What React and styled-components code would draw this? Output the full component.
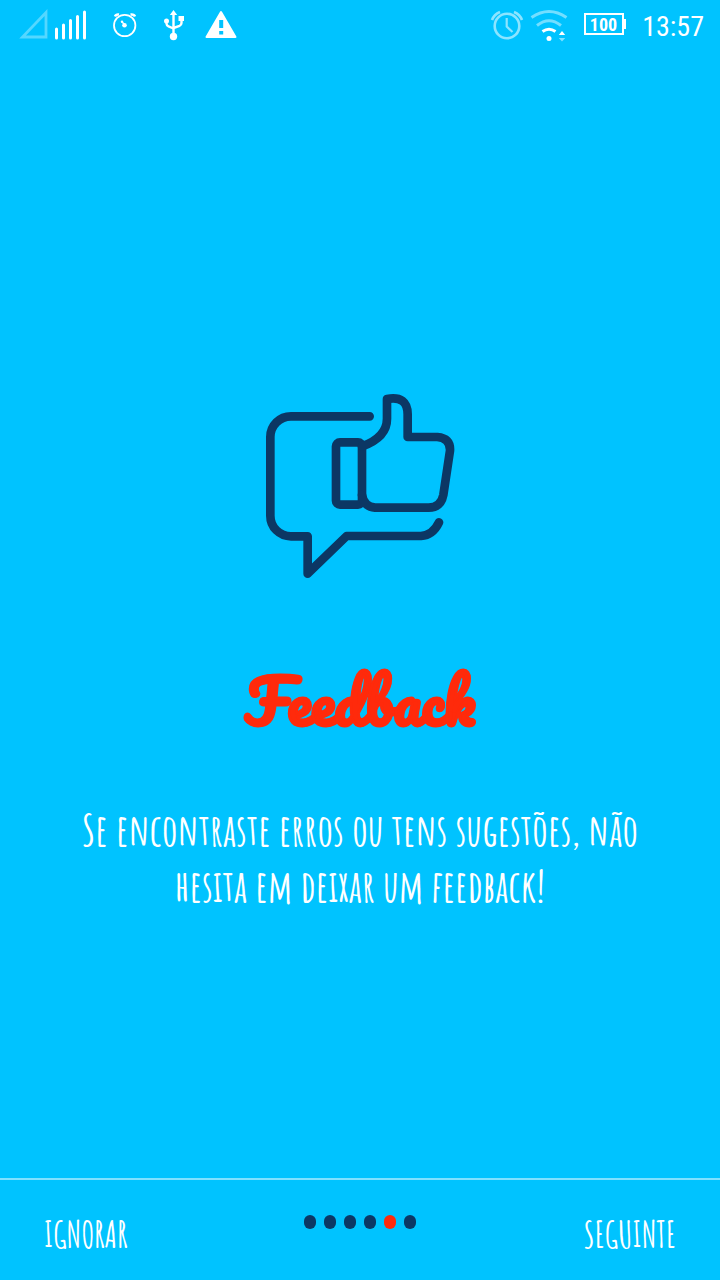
import React from 'react';
import styled, { createGlobalStyle } from 'styled-components';

const sky = '#00c3ff';
const navy = '#0c3764';
const red = '#ff2a0b';
const narrow = '"Amatic SC", "Liberation Sans Narrow", "Roboto Condensed", "Liberation Sans", sans-serif';

const GlobalStyle = createGlobalStyle`
  *, *::before, *::after { box-sizing: border-box; }
  body { margin: 0; background: ${sky}; }
`;

const Screen = styled.div`
  min-height: 100vh;
  display: flex;
  flex-direction: column;
  background: ${sky};
  color: #fff;
`;

const StatusBar = styled.header`
  display: flex;
  justify-content: space-between;
  height: 50px;
  padding: 0 16px 0 18px;
`;

const StatusGroup = styled.div`
  display: flex;
  align-items: center;
  gap: ${({ $gap }) => $gap}px;
`;

const StatusIcon = styled.svg`
  display: block;
  height: 50px;
  flex: none;
`;

const Clock = styled.time`
  font: 400 28px/50px "Roboto Condensed", Roboto, sans-serif;
  padding-top: 4px;
`;

const Slide = styled.main`
  flex: 1;
  display: flex;
  flex-direction: column;
  align-items: center;
  justify-content: center;
  padding: 65px 64px 0;
  text-align: center;
`;

const Illustration = styled.svg`
  width: 220px;
  height: 210px;
`;

const Title = styled.h1`
  margin: 69px 0 58px;
  font: 700 60px/84px Pacifico, "Liberation Serif", cursive;
  color: ${red};
  -webkit-text-stroke: 1px ${red};
`;

const Description = styled.p`
  margin: 0;
  max-width: 592px;
  font: 700 44px/56px ${narrow};
`;

const Footer = styled.footer`
  display: grid;
  grid-template-columns: 1fr auto 1fr;
  height: 102px;
  padding: 0 44px;
  border-top: 2px solid #7fe1ff;
`;

const NavButton = styled.button`
  justify-self: ${({ $side }) => $side};
  align-self: center;
  margin-top: 8px;
  padding: 0;
  border: 0;
  background: none;
  color: inherit;
  font: 700 36px/48px ${narrow};
  text-transform: uppercase;
  cursor: pointer;
`;

const Dots = styled.ol`
  display: flex;
  gap: 8px;
  margin: 35px 0 0;
  padding: 0;
  list-style: none;
`;

const Dot = styled.li`
  width: 12px;
  height: 14px;
  border-radius: 6px;
  background: ${({ $active }) => ($active ? red : navy)};
`;

function SystemIcons() {
  return (
    <StatusGroup $gap={18}>
      <StatusIcon width="72" viewBox="18 0 72 50" aria-label="Signal">
        <path d="M46 12.500V37H22.500Z" fill="none" stroke="#fff" strokeOpacity=".33" strokeWidth="2.800" />
        <path d="M56.500 29v9M63.500 25v13M70.500 20.500v17.500M77.500 16.500v21.500M84.500 12v26" stroke="#fff" strokeWidth="3" strokeLinecap="round" />
      </StatusIcon>
      <StatusIcon width="34" viewBox="108 0 34 50" aria-label="Alarm">
        <g fill="none" stroke="#fff">
          <circle cx="124.700" cy="25.500" r="10.700" strokeWidth="1.800" />
          <path d="M115 16.500Q116 14 119 14.500M130.500 14.500Q134 14 135 16.500" strokeWidth="2.500" />
          <path d="M122 21.500L124.500 25" strokeWidth="1.300" />
        </g>
        <circle cx="124.500" cy="25.200" r="2.300" fill="#fff" />
        <circle cx="122" cy="21.800" r="1.200" fill="#fff" />
      </StatusIcon>
      <StatusIcon width="27" viewBox="160 0 27 50" aria-label="USB">
        <g fill="#fff">
          <path d="M173.500 10l3.700 5h-7.400zM178.500 16h5.500v5h-5.500z" />
          <circle cx="166.500" cy="21" r="2.500" />
          <circle cx="173.500" cy="36.500" r="3.700" />
        </g>
        <path d="M173.500 14V36M166.500 21V23.500Q166.500 25.500 168.500 26.300L173.500 28.500M181.500 20V23Q181.500 25 179.500 25.800L173.500 28" fill="none" stroke="#fff" strokeWidth="2.400" />
      </StatusIcon>
      <StatusIcon width="32" viewBox="205 0 32 50" aria-label="Warning">
        <path d="M221 12L235.500 37H206.500Z" fill="#fff" stroke="#fff" strokeWidth="2" strokeLinejoin="round" />
        <path d="M221.200 20v8M221.200 31v3.500" stroke={sky} strokeWidth="4" />
      </StatusIcon>
    </StatusGroup>
  );
}

function DeviceStatus() {
  return (
    <StatusGroup $gap={16}>
      <StatusGroup $gap={6}>
        <StatusIcon width="34" viewBox="490 0 34 50" aria-label="Alarm set">
          <g fill="none" stroke="#fff" strokeOpacity=".55" strokeWidth="2.600">
            <circle cx="507" cy="26" r="12.300" />
            <path d="M492 20Q494 14.500 500 12M514 12Q520 14.500 522 20" />
            <path d="M506.700 18V26.500L512.500 32" strokeWidth="2.200" />
          </g>
        </StatusIcon>
        <StatusIcon width="38" viewBox="530 0 38 50" aria-label="Wi-Fi">
          <g fill="none" stroke="#fff" strokeWidth="3">
            <path d="M531.500 17.500Q549 5.500 566.500 17.500M537 25.500Q549 16 561 25.500" strokeOpacity=".45" />
            <path d="M542.500 31.500Q549 27 555.500 31.500" />
          </g>
          <circle cx="549" cy="38.500" r="2.500" fill="#fff" />
          <path d="M562 31l3.200 4h-6.400z" fill="#fff" />
          <path d="M562 41.500l3.200-3.500h-6.400z" fill="#fff" fillOpacity=".5" />
        </StatusIcon>
      </StatusGroup>
      <StatusIcon width="42" viewBox="584 0 42 50" aria-label="Battery">
        <rect x="585" y="14" width="38" height="20" fill="none" stroke="#fff" strokeWidth="2" />
        <path d="M624 19h2v10h-2z" fill="#fff" />
        <text x="603.500" y="31" textAnchor="middle" fill="#fff" fontFamily='"Roboto Condensed", Roboto, sans-serif' fontSize="18" fontWeight="700">100</text>
      </StatusIcon>
      <Clock>13:57</Clock>
    </StatusGroup>
  );
}

function ThumbsUpBubble() {
  return (
    <Illustration viewBox="0 0 660 630" aria-hidden="true">
      <g fill="none" stroke={navy} strokeWidth="26" strokeLinecap="round" strokeLinejoin="round">
        <path d="M359 109H123A62 62 0 0 0 61 171V407A62 62 0 0 0 123 469H173V581L290 468H513Q549 465 567 427" />
        <rect x="258" y="187" width="78" height="187" rx="12" />
        <path d="M336 199Q411 172 411 116V57Q473 46 473 103V171H562Q602 175 600 212L580 345Q573 382 536 383H375Q342 380 336 345" />
      </g>
    </Illustration>
  );
}

export default function App() {
  return (
    <Screen>
      <GlobalStyle />
      <StatusBar>
        <SystemIcons />
        <DeviceStatus />
      </StatusBar>
      <Slide>
        <ThumbsUpBubble />
        <Title>Feedback</Title>
        <Description>Se encontraste erros ou tens sugestões, não hesita em deixar um feedback!</Description>
      </Slide>
      <Footer>
        <NavButton type="button" $side="start">Ignorar</NavButton>
        <Dots>
          {[0, 1, 2, 3, 4, 5].map((page) => (
            <Dot key={page} $active={page === 4} aria-current={page === 4 ? 'step' : undefined} />
          ))}
        </Dots>
        <NavButton type="button" $side="end">Seguinte</NavButton>
      </Footer>
    </Screen>
  );
}
